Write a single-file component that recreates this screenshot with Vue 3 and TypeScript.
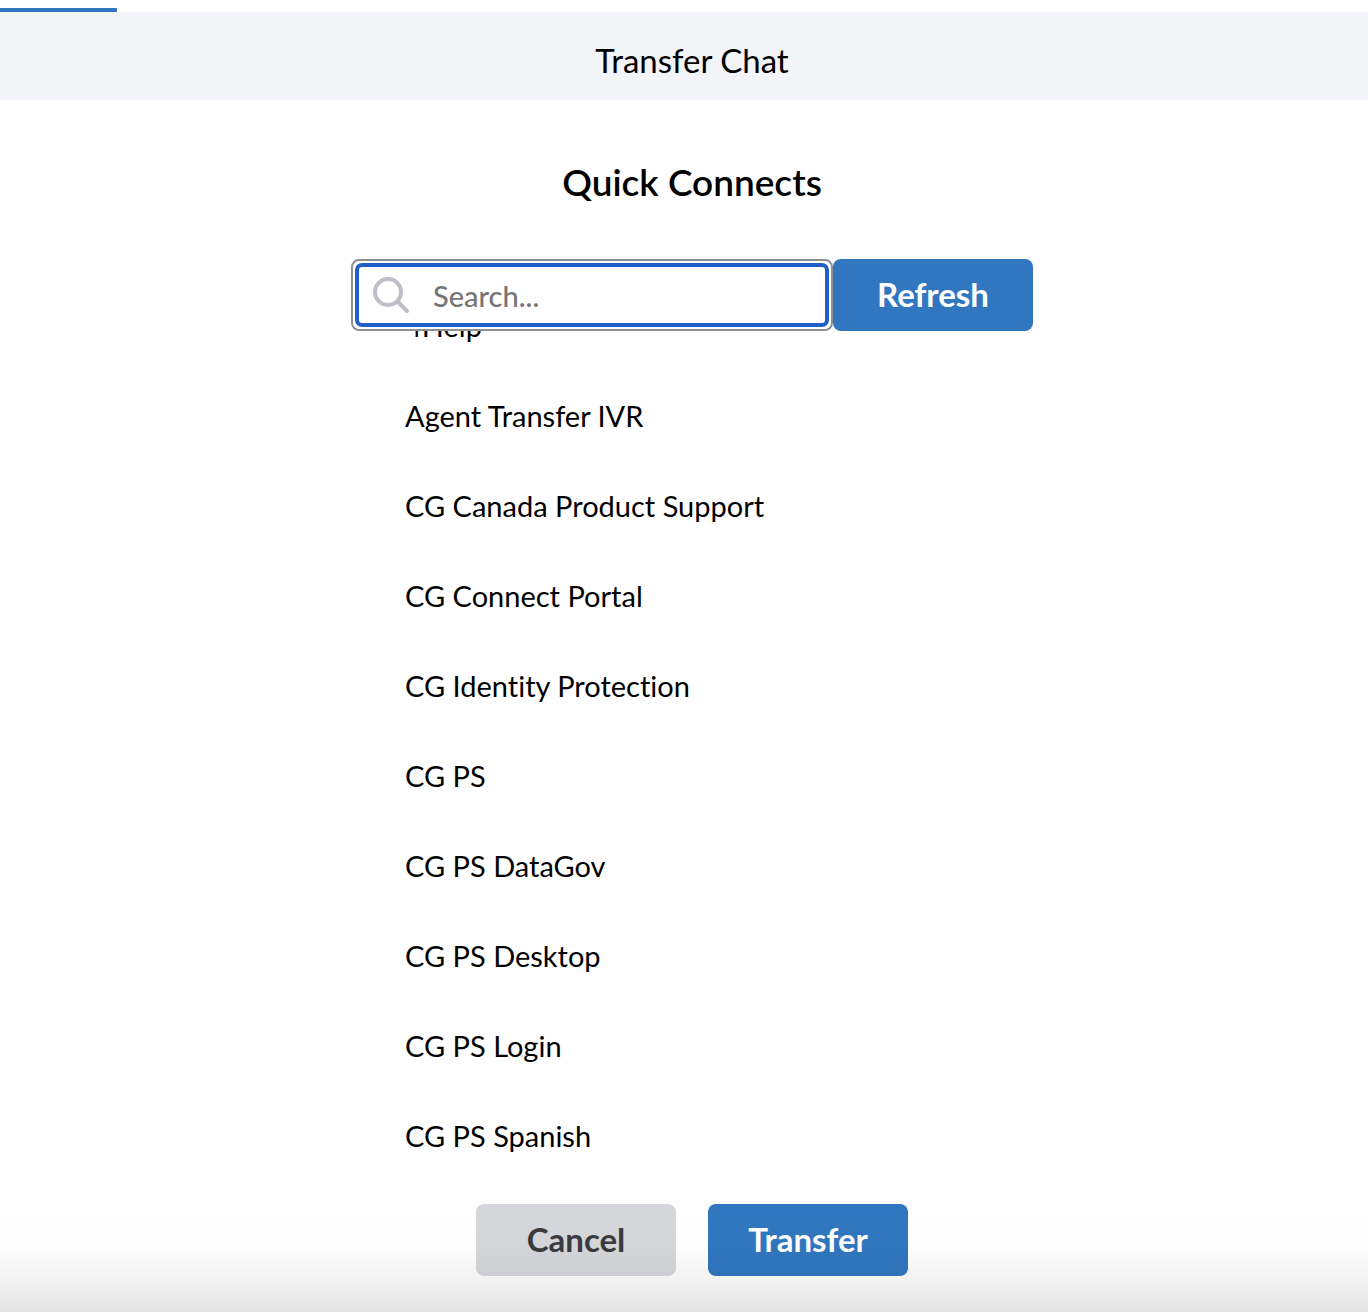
<script setup lang="ts">
import { onMounted, ref } from 'vue'

const query = ref('')
const list = ref<HTMLElement | null>(null)
const connects: string[] = [
  '4Help',
  'Agent Transfer IVR',
  'CG Canada Product Support',
  'CG Connect Portal',
  'CG Identity Protection',
  'CG PS',
  'CG PS DataGov',
  'CG PS Desktop',
  'CG PS Login',
  'CG PS Spanish',
]

onMounted(() => {
  if (list.value) list.value.scrollTop = 50
})
</script>

<template>
  <div class="page">
    <div class="tabs"><div class="tab-indicator"></div></div>
    <header class="title-bar">
      <h1>Transfer Chat</h1>
    </header>
    <main>
      <h2>Quick Connects</h2>
      <div class="panel">
        <form class="search-row" @submit.prevent>
          <label class="search">
            <svg viewBox="0 0 40 40" width="40" height="40" aria-hidden="true">
              <circle cx="17" cy="17" r="13" />
              <path d="M26.5 26.5 L36 36" />
            </svg>
            <input v-model="query" type="text" placeholder="Search..." aria-label="Search quick connects" />
          </label>
          <button type="button" class="primary">Refresh</button>
        </form>
        <ul ref="list" class="list">
          <li v-for="name in connects" :key="name">{{ name }}</li>
        </ul>
      </div>
      <div class="actions">
        <button type="button" class="secondary">Cancel</button>
        <button type="button" class="primary">Transfer</button>
      </div>
    </main>
    <div class="fade"></div>
  </div>
</template>

<style>
body {
  margin: 0;
  background: #fff;
}
</style>

<style scoped>
.page {
  position: relative;
  font-family: Lato, sans-serif;
  font-variant-ligatures: none;
  color: #000;
}
.tabs {
  display: flex;
  align-items: flex-end;
  height: 12px;
}
.tab-indicator {
  width: 117px;
  height: 4px;
  background: #3077bf;
}
.title-bar {
  padding: 28px 0 20px 16px;
  background: #f3f4f8;
  text-align: center;
}
h1,
h2 {
  margin: 0;
  line-height: 40px;
}
h1 {
  font-size: 33px;
  font-weight: 400;
}
main {
  display: flex;
  flex-direction: column;
  align-items: center;
  padding: 62px 0 36px 16px;
}
h2 {
  font-size: 37px;
  font-weight: 600;
}
.panel {
  width: 682px;
  max-width: 100%;
  margin-top: 57px;
}
.search-row {
  display: flex;
}
.search {
  display: flex;
  flex: 1;
  position: relative;
  box-sizing: border-box;
  height: 72px;
  padding: 2px;
  border: 2px solid #8f8f93;
  border-radius: 8px;
  background: #fff;
}
.search svg {
  position: absolute;
  left: 18px;
  top: 14px;
  fill: none;
  stroke: #bcbfc8;
  stroke-width: 4;
  stroke-linecap: round;
}
.search input {
  box-sizing: border-box;
  width: 100%;
  min-width: 0;
  padding: 0 16px 0 74px;
  border: 4px solid #2160cb;
  border-radius: 7px;
  outline: none;
  background: transparent;
  font: 500 29px Lato, sans-serif;
}
.search input::placeholder {
  color: #757575;
  opacity: 1;
}
button {
  width: 200px;
  height: 72px;
  padding: 0 0 2px;
  border: 0;
  border-radius: 8px;
  font: 700 33px Lato, sans-serif;
}
.primary {
  background: #3077bf;
  color: #fff;
}
.secondary {
  background: #d6d7db;
  color: #3a3b3f;
}
.list {
  box-sizing: border-box;
  height: 853px;
  margin: 0;
  padding: 0 0 8px 54px;
  overflow-y: auto;
  scrollbar-width: none;
  list-style: none;
}
.list li {
  font-size: 29px;
  line-height: 90px;
}
.actions {
  display: flex;
  gap: 32px;
  margin-top: 20px;
}
.fade {
  position: absolute;
  left: 0;
  right: 0;
  bottom: 0;
  height: 100px;
  background: linear-gradient(rgba(0, 0, 0, 0), rgba(0, 0, 0, 0.01) 35%, rgba(0, 0, 0, 0.05) 70%, rgba(0, 0, 0, 0.11));
  pointer-events: none;
}
</style>
